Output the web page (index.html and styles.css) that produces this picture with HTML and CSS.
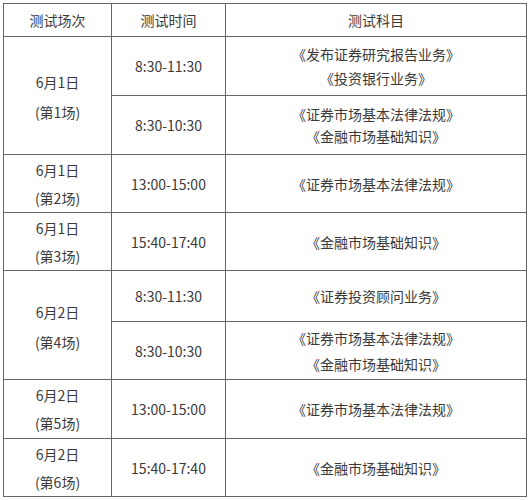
FILE: index.html
```html
<!DOCTYPE html>
<html lang="zh-CN">
<head>
<meta charset="utf-8">
<title>测试安排</title>
<link rel="stylesheet" href="styles.css">
</head>
<body>
<table class="schedule">
  <colgroup>
    <col class="c-session">
    <col class="c-time">
    <col class="c-subject">
  </colgroup>
  <thead>
    <tr class="h-head">
      <th>测试场次</th>
      <th>测试时间</th>
      <th>测试科目</th>
    </tr>
  </thead>
  <tbody>
    <tr class="h-59">
      <td rowspan="2" class="session loose">6月1日<br>(第1场)</td>
      <td>8:30-11:30</td>
      <td class="subject">《发布证券研究报告业务》<br>《投资银行业务》</td>
    </tr>
    <tr class="h-59">
      <td>8:30-10:30</td>
      <td class="subject tight">《证券市场基本法律法规》<br>《金融市场基础知识》</td>
    </tr>
    <tr class="h-58">
      <td class="session">6月1日<br>(第2场)</td>
      <td>13:00-15:00</td>
      <td class="subject">《证券市场基本法律法规》</td>
    </tr>
    <tr class="h-58">
      <td class="session">6月1日<br>(第3场)</td>
      <td>15:40-17:40</td>
      <td class="subject">《金融市场基础知识》</td>
    </tr>
    <tr class="h-51">
      <td rowspan="2" class="session loose">6月2日<br>(第4场)</td>
      <td>8:30-11:30</td>
      <td class="subject">《证券投资顾问业务》</td>
    </tr>
    <tr class="h-58">
      <td>8:30-10:30</td>
      <td class="subject wide">《证券市场基本法律法规》<br>《金融市场基础知识》</td>
    </tr>
    <tr class="h-59">
      <td class="session">6月2日<br>(第5场)</td>
      <td>13:00-15:00</td>
      <td class="subject">《证券市场基本法律法规》</td>
    </tr>
    <tr class="h-58">
      <td class="session">6月2日<br>(第6场)</td>
      <td>15:40-17:40</td>
      <td class="subject">《金融市场基础知识》</td>
    </tr>
  </tbody>
</table>
</body>
</html>
```
FILE: styles.css
```css
html, body {
  margin: 0;
  padding: 0;
  background: #ffffff;
}

body {
  padding: 3px 0 0 3px;
  font-family: "Noto Sans CJK SC", "Noto Sans", sans-serif;
  font-size: 14px;
  color: #3a3a3a;
}

.schedule {
  border-collapse: collapse;
  table-layout: fixed;
  width: 523px;
}

.c-session { width: 108px; }
.c-time { width: 114px; }
.c-subject { width: 301px; }

.schedule th,
.schedule td {
  border: 1px solid #666666;
  padding: 0;
  text-align: center;
  vertical-align: middle;
  font-weight: normal;
  line-height: 24px;
}

.schedule .session { line-height: 28px; }
.schedule .session.loose { line-height: 30px; padding-top: 3px; }
.schedule .subject { line-height: 24px; }
.schedule .subject.tight { line-height: 22px; }
.schedule .subject.wide { line-height: 26px; }

.h-head { height: 33px; }
.h-51 { height: 51px; }
.h-58 { height: 58px; }
.h-59 { height: 59px; }
```
